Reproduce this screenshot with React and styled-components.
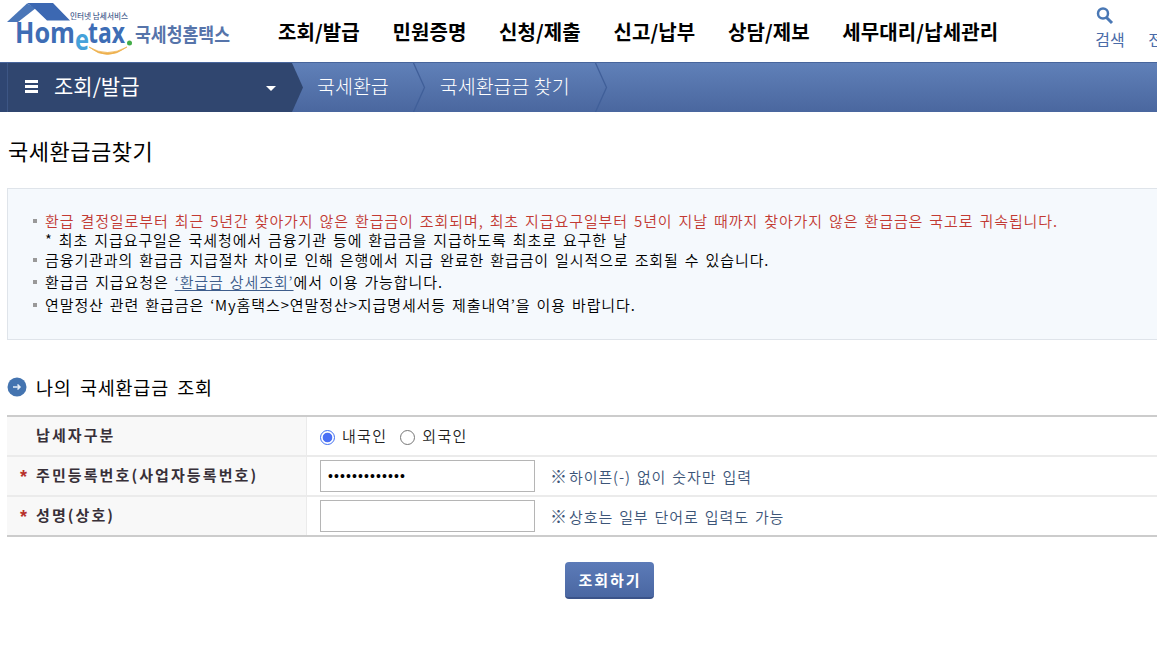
import React, { useState } from "react";
import styled, { createGlobalStyle } from "styled-components";

const GlobalStyle = createGlobalStyle`
  * {
    box-sizing: border-box;
  }
  body {
    margin: 0;
    background: #fff;
    color: #000;
    font-family: "Noto Sans CJK KR", sans-serif;
    font-size: 15px;
    overflow: hidden;
  }
  ul {
    margin: 0;
    padding: 0;
    list-style: none;
  }
`;

const Wrapper = styled.div`
  width: 100%;
  height: 646px;
  overflow: hidden;
`;

const Header = styled.header`
  display: flex;
  height: 62px;
  padding-left: 5px;
  overflow: hidden;
`;

const Logo = styled.svg`
  flex: none;
  width: 230px;
  height: 62px;
  overflow: visible;
`;

const Nav = styled.nav`
  display: flex;
  flex: none;
  gap: 32.6px;
  padding: 17px 0 0 43px;
`;

const NavLink = styled.a`
  font-size: 20px;
  font-weight: 700;
  line-height: 30px;
  letter-spacing: 0.1px;
  white-space: nowrap;
`;

const Tools = styled.div`
  display: flex;
  flex: none;
  gap: 23px;
  margin-left: 97px;
  padding-top: 7px;
`;

const Tool = styled.a`
  display: flex;
  flex-direction: column;
  width: 30px;
  flex: none;
  color: #4a6ba8;
  font-size: 16px;
  line-height: 22px;
  white-space: nowrap;

  svg {
    display: block;
    width: 20px;
    height: 20px;
    margin-bottom: 1px;
  }
`;

const LocationBar = styled.div`
  display: flex;
  height: 50px;
  border-top: 1px solid #47659c;
  background: linear-gradient(#6080b8, #4a679f);
  color: #fff;
`;

const MenuEdge = styled.div`
  flex: none;
  width: 8px;
  background: #2f4672;
  border-right: 1px solid #3d5685;
`;

const CurrentMenu = styled.div`
  display: flex;
  flex: none;
  align-items: center;
  width: 295px;
  padding: 0 27px 6px 17px;
  background: #30466f;
  clip-path: polygon(0 0, 284px 0, 100% 50%, 284px 100%, 0 100%);
  font-size: 21px;
`;

const Bars = styled.span`
  flex: none;
  width: 13px;
  height: 13px;
  margin: 4px 16px 0 0;
  border-top: 3px solid #fff;
  border-bottom: 3px solid #fff;
  display: flex;
  align-items: center;

  &::before {
    content: "";
    width: 100%;
    height: 3px;
    background: #fff;
  }
`;

const MenuName = styled.span`
  flex: 1;
  font-weight: 400;
`;

const Caret = styled.span`
  margin-top: 7px;
  border: 5px solid transparent;
  border-top-color: #fff;
  border-bottom: 0;
`;

const Crumb = styled.span`
  flex: none;
  padding: 8px 0 0 ${props => props.$left}px;
  font-size: 19.5px;
  font-weight: 300;
  line-height: 30px;
  white-space: nowrap;
`;

const Chevron = styled.svg`
  flex: none;
  width: 13px;
  height: 49px;
  margin-left: ${props => props.$left}px;
`;

const Content = styled.main`
  padding-left: 7px;
`;

const Title = styled.h1`
  margin: 21px 0 21px 1px;
  font-size: 22px;
  font-weight: 400;
  line-height: 34px;
  letter-spacing: 0.5px;
`;

const Notice = styled.ul`
  height: 152px;
  padding: 21px 0 0 24px;
  border: 1px solid #dfe4ea;
  border-right: 0;
  background: #f5f9fd;
`;

const NoticeItem = styled.li`
  display: flex;
  height: ${props => props.$height}px;
  align-items: center;
  color: ${props => (props.$warn ? "#c23a33" : "#000")};
  font-weight: 350;
  letter-spacing: ${props => props.$spacing}px;
  word-spacing: 1.8px;
  white-space: pre;

  &::before {
    content: "";
    flex: none;
    width: 4px;
    height: 4px;
    margin: 2px 8px 0 1px;
    background: ${props => (props.$plain ? "transparent" : "#999")};
  }
`;

const NoticeLink = styled.a`
  color: #3e5d8c;
  text-decoration: underline;
  text-underline-offset: 2px;
`;

const SubTitle = styled.h2`
  display: flex;
  align-items: center;
  height: 30px;
  margin: 32px 0 13px;
  font-size: 18.5px;
  font-weight: 400;
  letter-spacing: 0.8px;
  word-spacing: 3.3px;

  svg {
    width: 20px;
    height: 20px;
    margin-right: 9px;
  }
`;

const Form = styled.div`
  border-top: 2px solid #ccc;
  border-bottom: 2px solid #ccc;
`;

const Row = styled.div`
  display: flex;
  height: ${props => (props.$last ? 38 : 40)}px;
  border-bottom: ${props => (props.$last ? "0" : "2px solid #ebebeb")};
`;

const RowHead = styled.div`
  display: flex;
  align-items: center;
  flex: none;
  width: 300px;
  padding-bottom: 3px;
  border-right: 1px solid #ebebeb;
  background: #f8f8f8;
  color: #383038;
  font-weight: 700;
  letter-spacing: 2.1px;
`;

const Mark = styled.span`
  width: 29px;
  padding: 5px 0 0 13px;
  color: #b8312b;
  font: 700 18px/14px "Liberation Sans", sans-serif;
`;

const RowBody = styled.div`
  display: flex;
  align-items: center;
  padding-left: 13px;
  font-weight: 350;
`;

const RadioLabel = styled.label`
  display: flex;
  align-items: center;
  margin-right: 13px;
  padding-bottom: 1px;
  color: #222;
  letter-spacing: 1.3px;
`;

const Radio = styled.input`
  appearance: none;
  width: 15px;
  height: 15px;
  margin: 3px 7px 0 0;
  border: 1px solid #767676;
  border-radius: 50%;

  &:checked {
    border-color: #3f6ff0;
    background: radial-gradient(#4a6ff5 4.4px, #fff 5.2px);
  }
`;

const Field = styled.input`
  width: 215px;
  height: 32px;
  padding: 0 7px;
  border: 1px solid #b5b5b5;
  outline: 0;
  background: #fff;
  color: #000;
  font: 14px "Liberation Sans", sans-serif;
  letter-spacing: ${props => (props.type === "password" ? "1.1px" : "0")};
`;

const Help = styled.span`
  display: flex;
  align-items: center;
  padding-left: 15px;
  color: #3c5578;
  letter-spacing: 0.9px;
  word-spacing: 1.8px;
  white-space: pre;
`;

const HelpMark = styled.span`
  width: 19px;
  padding-bottom: 2px;
  font-size: 17px;
  letter-spacing: 0;
`;

const SubmitButton = styled.button`
  display: block;
  width: 89px;
  height: 37px;
  margin: 25px 0 0 558px;
  padding: 0 0 1px 1px;
  border: 0;
  border-bottom: 2px solid #3b5389;
  border-radius: 4px;
  background: linear-gradient(#5c7bb8, #4a67a2);
  color: #fff;
  font: 700 15px "Noto Sans CJK KR", sans-serif;
  letter-spacing: 2px;
`;

const menus = ["조회/발급", "민원증명", "신청/제출", "신고/납부", "상담/제보", "세무대리/납세관리"];

const HometaxLogo = () => (
  <Logo viewBox="5 0 230 62">
    {/* 지붕 */}
    <path d="M7 22 L27 3.500 L36 8 L18 22 Z" fill="#4a76b8" />
    <path d="M27 3 H53 L70 20.500 H47 L34 8 Z" fill="#3c68b2" />
    <g fill="#3e6db5" fontFamily="Open Sans, sans-serif" fontWeight="700">
      <text x="15" y="43" fontSize="29" textLength="60" lengthAdjust="spacingAndGlyphs">Hom</text>
      <text x="75" y="50" fontSize="28" fill="#45a2da" textLength="14" lengthAdjust="spacingAndGlyphs">e</text>
      <text x="88" y="43" fontSize="29" textLength="37" lengthAdjust="spacingAndGlyphs">tax</text>
    </g>
    <circle cx="129.500" cy="43" r="2.500" fill="#43ad49" />
    <path d="M89 47 Q107 62 127 47 Q107 58 89 47 Z" fill="#eeb04c" stroke="#eeb04c" strokeWidth="0.700" />
    <g fill="#4a6190" fontFamily="Noto Sans CJK KR, sans-serif">
      <text x="70" y="19" fontSize="7.500" fontWeight="500" textLength="58" lengthAdjust="spacingAndGlyphs">인터넷 납세서비스</text>
      <text x="135" y="42" fontSize="19" fontWeight="700" fill="#5674aa" textLength="95" lengthAdjust="spacingAndGlyphs">국세청홈택스</text>
    </g>
  </Logo>
);

const Arrow = ({ left }) => (
  <Chevron $left={left} viewBox="0 0 13 49">
    <path d="M0.500 0 L11.500 24.500 L0.500 49" fill="none" stroke="#405f99" strokeWidth="1.300" />
  </Chevron>
);

export default function App() {
  const [taxpayer, setTaxpayer] = useState("local");
  const [number, setNumber] = useState("0000000000000");
  const [name, setName] = useState("");

  return (
    <Wrapper>
      <GlobalStyle />
      <Header>
        <HometaxLogo />
        <Nav>
          {menus.map(menu => (
            <NavLink key={menu}>{menu}</NavLink>
          ))}
        </Nav>
        <Tools>
          <Tool>
            <svg viewBox="0 0 20 20" fill="none" stroke="#4a78b5">
              <circle cx="8" cy="6.500" r="5" strokeWidth="2.500" />
              <path d="M11.500 10.500 L17 16" strokeWidth="3" />
            </svg>
            검색
          </Tool>
          <Tool>
            <svg viewBox="0 0 20 20" />
            전
          </Tool>
        </Tools>
      </Header>

      {/* 현재 위치 */}
      <LocationBar>
        <MenuEdge />
        <CurrentMenu>
          <Bars />
          <MenuName>조회/발급</MenuName>
          <Caret />
        </CurrentMenu>
        <Crumb $left={14}>국세환급</Crumb>
        <Arrow left={24} />
        <Crumb $left={14}>국세환급금 찾기</Crumb>
        <Arrow left={25} />
      </LocationBar>

      <Content>
        <Title>국세환급금찾기</Title>
        <Notice>
          <NoticeItem $warn $height={20} $spacing={0.9}>
            환급 결정일로부터 최근 5년간 찾아가지 않은 환급금이 조회되며, 최초 지급요구일부터 5년이 지날 때까지 찾아가지 않은 환급금은 국고로 귀속됩니다.
          </NoticeItem>
          <NoticeItem $plain $height={19} $spacing={0.9}>
            * 최초 지급요구일은 국세청에서 금융기관 등에 환급금을 지급하도록 최초로 요구한 날
          </NoticeItem>
          <NoticeItem $height={20} $spacing={0.9}>
            금융기관과의 환급금 지급절차 차이로 인해 은행에서 지급 완료한 환급금이 일시적으로 조회될 수 있습니다.
          </NoticeItem>
          <NoticeItem $height={24} $spacing={0.9}>
            환급금 지급요청은 <NoticeLink>‘환급금 상세조회’</NoticeLink>에서 이용 가능합니다.
          </NoticeItem>
          <NoticeItem $height={22} $spacing={0.9}>
            연말정산 관련 환급금은 ‘My홈택스&gt;연말정산&gt;지급명세서등 제출내역’을 이용 바랍니다.
          </NoticeItem>
        </Notice>

        {/* 나의 국세환급금 조회 */}
        <SubTitle>
          <svg viewBox="0 0 20 20">
            <circle cx="10" cy="10" r="9.500" fill="#4474b0" />
            <path d="M6 10 H13 M10.500 7.500 L13 10 L10.500 12.500" fill="none" stroke="#e6eef8" strokeWidth="1.500" />
          </svg>
          나의 국세환급금 조회
        </SubTitle>
        <Form>
          <Row>
            <RowHead>
              <Mark />
              납세자구분
            </RowHead>
            <RowBody>
              <RadioLabel>
                <Radio type="radio" name="taxpayer" checked={taxpayer === "local"} onChange={() => setTaxpayer("local")} />
                내국인
              </RadioLabel>
              <RadioLabel>
                <Radio type="radio" name="taxpayer" checked={taxpayer === "foreign"} onChange={() => setTaxpayer("foreign")} />
                외국인
              </RadioLabel>
            </RowBody>
          </Row>
          <Row>
            <RowHead>
              <Mark>*</Mark>
              주민등록번호(사업자등록번호)
            </RowHead>
            <RowBody>
              <Field type="password" value={number} onChange={e => setNumber(e.target.value)} />
              <Help>
                <HelpMark>※</HelpMark>
                하이픈(-) 없이 숫자만 입력
              </Help>
            </RowBody>
          </Row>
          <Row $last>
            <RowHead>
              <Mark>*</Mark>
              성명(상호)
            </RowHead>
            <RowBody>
              <Field type="text" value={name} onChange={e => setName(e.target.value)} />
              <Help>
                <HelpMark>※</HelpMark>
                상호는 일부 단어로 입력도 가능
              </Help>
            </RowBody>
          </Row>
        </Form>
        <SubmitButton>조회하기</SubmitButton>
      </Content>
    </Wrapper>
  );
}
